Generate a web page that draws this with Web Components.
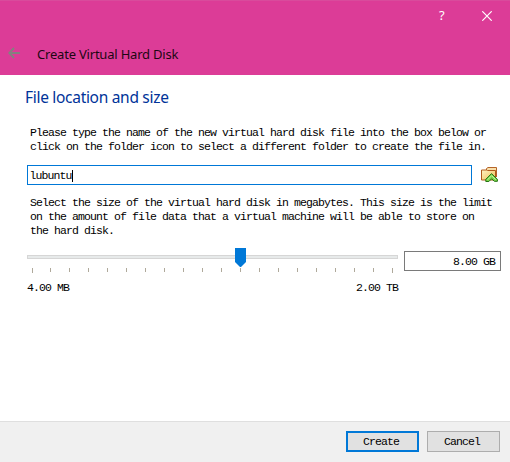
<!DOCTYPE html>
<html lang="en">
<head>
<meta charset="utf-8">
<title>Create Virtual Hard Disk</title>
<style>
html,body{margin:0;height:100%;overflow:hidden}
body{font:11.5px/14px "Liberation Mono",monospace;letter-spacing:-.9px;color:#000;background:#fff}
</style>
</head>
<body>
<wizard-window>
  <wizard-titlebar slot="header">Create Virtual Hard Disk</wizard-titlebar>
  <wizard-page heading="File location and size">
    <wizard-note>Please type the name of the new virtual hard disk file into the box below or<br>click on the folder icon to select a different folder to create the file in.</wizard-note>
    <path-field>lubuntu</path-field>
    <wizard-note>Select the size of the virtual hard disk in megabytes. This size is the limit<br>on the amount of file data that a virtual machine will be able to store on<br>the hard disk.</wizard-note>
    <size-slider min="4.00 MB" max="2.00 TB">8.00 GB</size-slider>
  </wizard-page>
  <push-button slot="footer" primary>Create</push-button>
  <push-button slot="footer">Cancel</push-button>
</wizard-window>
<script>
const define = (name, html, setup) => customElements.define(name, class extends HTMLElement {
  constructor() {
    super();
    this.attachShadow({mode: 'open'}).innerHTML = html;
  }
  connectedCallback() { if (setup) setup(this, this.shadowRoot); }
});

define('wizard-window', `<style>
:host{display:flex;flex-direction:column;width:510px;height:462px;background:#fff}
main{flex:1}
footer{box-sizing:border-box;height:41px;border-top:1px solid #dfdfdf;background:#f0f0f0;display:flex;justify-content:flex-end;gap:8px;padding:9px 10px 0 0}
</style><slot name="header"></slot><main><slot></slot></main><footer><slot name="footer"></slot></footer>`);

define('wizard-titlebar', `<style>
:host{display:flex;flex-direction:column;box-sizing:border-box;height:75px;background:#dc3c97;border-top:1px solid #d94b9c;color:#1c0713}
.controls{display:flex;justify-content:flex-end;height:29px;align-items:center;gap:37px;padding-right:18px;box-sizing:border-box}
.title{display:flex;align-items:flex-start;height:45px;padding:14px 0 0 8px;gap:17px;font:13px/20px "Noto Sans",sans-serif;letter-spacing:-.2px;box-sizing:border-box}
.title svg{margin-top:3px}
svg{display:block}
.q{font:13px/20px "Noto Sans",sans-serif;color:#fff;width:6px;margin-top:-2px}
</style>
<div class="controls"><span class="q">?</span><svg width="10" height="10" fill="none" stroke="#fff" stroke-width="1.2"><path d="M.3.3 9.7 9.7M9.7.3.3 9.7"/></svg></div>
<div class="title"><svg width="12" height="12" fill="none" stroke="#84807f" stroke-width="2"><path d="M12 6H1.5M6 1 1.3 6 6 11"/></svg><span><slot></slot></span></div>`);

define('wizard-page', `<style>
:host{display:flex;flex-direction:column}
h1{margin:10px 0 0 25px;font:15.5px/24px "Noto Sans",sans-serif;letter-spacing:-.3px;color:#039;height:24px}
</style><h1></h1><slot></slot>`, (el, root) => root.querySelector('h1').textContent = el.getAttribute('heading'));

define('wizard-note', `<style>:host{display:block;margin:17px 0 0 30px;white-space:nowrap}</style><slot></slot>`);

define('path-field', `<style>
:host{display:flex;align-items:center;height:20px;margin:11px 0 -6px 27px;gap:9px}
.box{box-sizing:border-box;width:445px;height:20px;border:1px solid #0078d7;display:flex;align-items:center;padding:1px 0 0 1.5px}
i{width:1px;height:12px;background:#000}
svg{display:block}
</style><div class="box"><slot></slot><i></i></div>
<svg width="17" height="16" viewBox="0 0 17 16">
<defs><linearGradient id="f" x2="1" y2="1"><stop stop-color="#fff3c2"/><stop offset="1" stop-color="#f0bd55"/></linearGradient></defs>
<path d="M5.5 3.5V1.5L7 .5h8.5V10" fill="#f9dfaa" stroke="#b5652a"/>
<path d="M.5 13v-10h5l1 .5h8V13z" fill="url(#f)" stroke="#b05a1a"/>
<path d="M4.8 12.3 10.5 6.6l5.9 5.7v2h-3l-2.8-2.5-2.7 2.7H4.8z" fill="#7bd64a" stroke="#247313"/>
<path d="m6.6 12.7 4-4 4.1 4" fill="none" stroke="#c7f5a3"/></svg>`);

define('size-slider', `<style>
:host{display:grid;grid-template-columns:371px 97px;column-gap:6px;margin:10px 0 0 27px}
.track{height:33px}
svg{display:block}
.labels{display:flex;justify-content:space-between;height:14px}
.value{box-sizing:border-box;height:20px;margin-top:3px;border:1px solid #7a7a7a;display:flex;align-items:center;justify-content:flex-end;padding:1px 5px 0 0}
</style>
<div><div class="track"><svg width="371" height="33" shape-rendering="crispEdges"><rect x=".5" y="7.5" width="370" height="3" fill="#e7eaea" stroke="#d6d6d6"/><g id="ticks" fill="#afa99b"></g><path d="M208 0h11v14l-5 5h-1l-5-5z" fill="#0078d7" shape-rendering="auto"/></svg></div>
<div class="labels"><span id="min"></span><span id="max"></span></div></div>
<div class="value"><slot></slot></div>`, (el, root) => {
  root.getElementById('min').textContent = el.getAttribute('min');
  root.getElementById('max').textContent = el.getAttribute('max');
  const g = root.getElementById('ticks');
  for (let i = 0; i < 20; i++) {
    const r = document.createElementNS('http://www.w3.org/2000/svg', 'rect');
    const end = i === 0 || i === 19;
    r.setAttribute('x', i ? 4 + i * 19 : 5);
    r.setAttribute('y', 20);
    r.setAttribute('width', 1);
    r.setAttribute('height', end ? 5 : 4);
    g.append(r);
  }
});

define('push-button', `<style>
:host{box-sizing:border-box;width:73px;height:21px;border:1px solid #adadad;background:#e1e1e1;display:flex;align-items:center;justify-content:center;padding:1px 3px 0 0}
:host([primary]){border:2px solid #0078d7}
</style><span><slot></slot></span>`);
</script>
</body>
</html>
